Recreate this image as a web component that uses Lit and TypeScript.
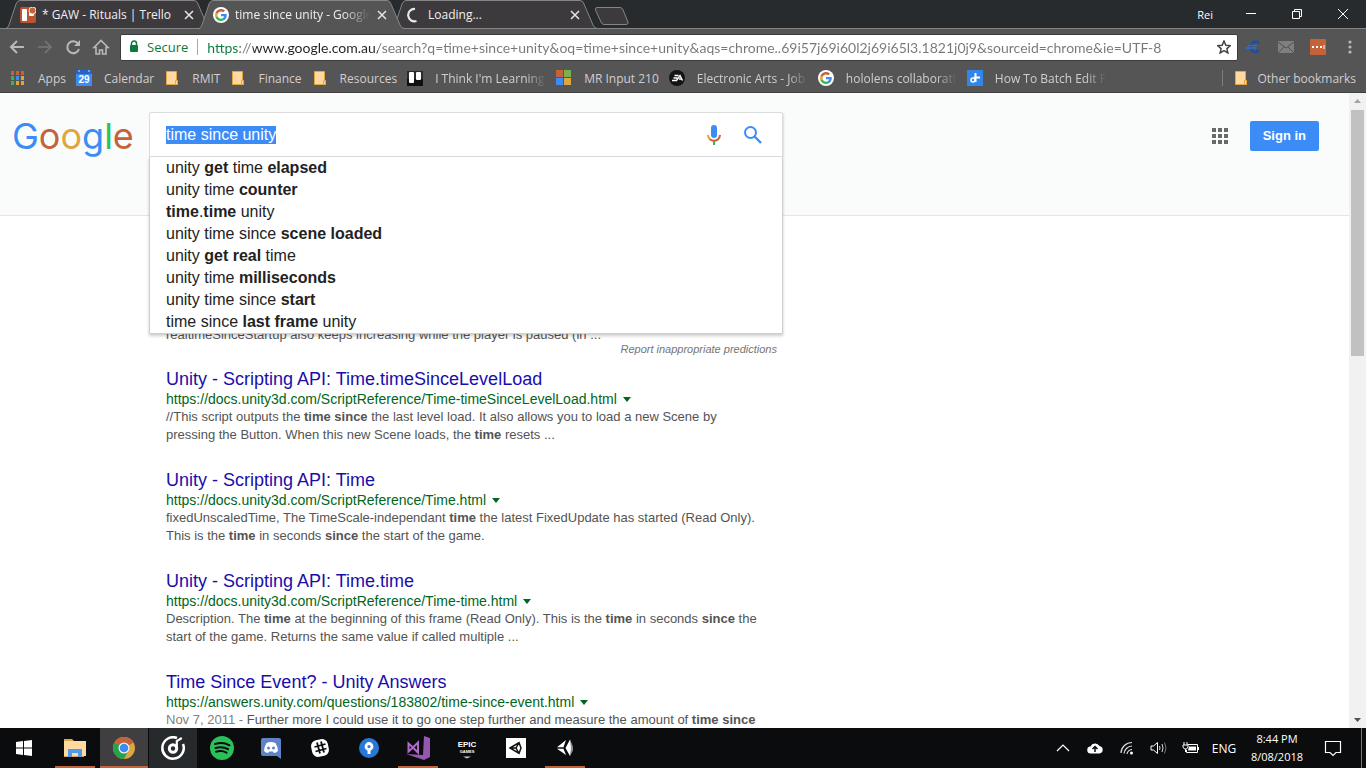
import { LitElement, html, svg, css } from "lit";
import { customElement } from "lit/decorators.js";
import { classMap } from "lit/directives/class-map.js";

const googleG = () => html`<svg width="16" height="16" viewBox="0 0 16 16" aria-hidden="true">
  <circle cx="8" cy="8" r="8" fill="#fff" />
  <g transform="translate(2 2) scale(.25)">
    <path fill="#3b8cf7" d="M47 24.500c0-1.600-.1-3.100-.4-4.500H24v9h12.900c-.6 3-2.200 5.500-4.800 7.200v6h7.700c4.500-4.200 7.200-10.300 7.200-17.700z" />
    <path fill="#2cb956" d="M24 48c6.500 0 11.900-2.100 15.900-5.800l-7.700-6c-2.200 1.400-4.900 2.300-8.200 2.300-6.300 0-11.600-4.200-13.500-9.900H2.600v6.200C6.500 42.600 14.600 48 24 48z" />
    <path fill="#dfa63f" d="M10.500 28.600c-1-2.900-1-6.200 0-9.200v-6.200H2.600a24 24 0 0 0 0 21.600z" />
    <path fill="#c4623a" d="M24 9.500c3.500 0 6.700 1.200 9.200 3.600l6.900-6.900C35.900 2.400 30.500 0 24 0 14.600 0 6.500 5.400 2.600 13.200l7.900 6.200C12.400 13.700 17.700 9.500 24 9.500z" />
  </g>
</svg>`;

const folder = () => html`<svg width="16" height="16" viewBox="0 0 16 16" aria-hidden="true">
  <path d="M2.500 1.500h10v9h1v4h-11z" fill="#ffd9a0" stroke="#e3a445" />
  <path d="M11.500 14.500v-4h2v4z" fill="#ffd9a0" stroke="#e3a445" />
</svg>`;

const appsIcon = () => html`<svg width="16" height="16" viewBox="0 0 16 16" aria-hidden="true">
  ${[["#c4623a", "#c4623a", "#c4623a"], ["#2cb956", "#3b8cf7", "#dfa63f"], ["#2cb956", "#dfa63f", "#dfa63f"]].map(
    (row, y) => row.map((c, x) => svg`<rect x=${1 + x * 5} y=${1 + y * 5} width="3" height="4" fill=${c} />`)
  )}
</svg>`;

const calendarIcon = () => html`<svg width="16" height="16" viewBox="0 0 16 16" aria-hidden="true">
  <rect width="16" height="16" fill="#3b8cf7" /><rect width="16" height="4" fill="#2a63bd" />
  <path d="M3 0v2M13 0v2" stroke="#cfe0fa" />
  <text x="8" y="13" text-anchor="middle" font-family="Liberation Sans, sans-serif" font-weight="700" font-size="10" fill="#fff">29</text>
</svg>`;

const trelloDark = () => html`<svg width="16" height="16" viewBox="0 0 16 16" aria-hidden="true">
  <rect y="8" width="16" height="8" fill="#101010" /><rect y="1" width="16" height="8" fill="#2c2a2c" />
  <rect x="2" y="2" width="5" height="11" rx="1" fill="#fff" /><rect x="9" y="2" width="5" height="8" rx="1" fill="#fff" />
</svg>`;

const trelloRed = () => html`<svg width="16" height="16" viewBox="0 0 16 16" aria-hidden="true">
  <rect width="16" height="16" rx="2" fill="#b9552f" />
  <rect x="2" y="2" width="5" height="12" rx="1" fill="#fff" />
  <rect x="9" y="2" width="5" height="7" rx="1" fill="#fff" />
  <circle cx="12.500" cy="3.500" r="3.500" fill="#c4623a" stroke="#f3e4dd" />
</svg>`;

const microsoftIcon = () => html`<svg width="16" height="16" viewBox="0 0 16 16" aria-hidden="true">
  <rect width="7" height="7" fill="#c4623a" /><rect x="8" width="7" height="7" fill="#7bb050" />
  <rect y="8" width="7" height="7" fill="#3b8cf7" /><rect x="8" y="8" width="7" height="7" fill="#dfa63f" />
</svg>`;

const eaIcon = () => html`<svg width="16" height="16" viewBox="0 0 16 16" aria-hidden="true">
  <circle cx="8" cy="8" r="8" fill="#141414" />
  <path d="M5.500 5.500h4M4.500 8h4M3 10.500h4.500L11 5.500l2.500 5M10 9h3" fill="none" stroke="#fff" stroke-width="1.400" />
</svg>`;

const plusIcon = () => html`<svg width="16" height="16" viewBox="0 0 16 16" aria-hidden="true">
  <rect width="16" height="16" fill="#3285ea" />
  <path d="M8.500 3v9M7 7.500h6" stroke="#fff" stroke-width="2" /><circle cx="6" cy="10" r="2" fill="none" stroke="#fff" stroke-width="1.500" />
</svg>`;

const spinner = () => html`<svg width="16" height="16" viewBox="0 0 16 16" aria-hidden="true">
  <path d="M9 2a6.200 6.200 0 1 0 1.500 12" fill="none" stroke="#e8e8e8" stroke-width="2.200" />
</svg>`;

const bookmarks = [
  { label: "Apps", icon: appsIcon, clip: false },
  { label: "Calendar", icon: calendarIcon, clip: false },
  { label: "RMIT", icon: folder, clip: false },
  { label: "Finance", icon: folder, clip: false },
  { label: "Resources", icon: folder, clip: false },
  { label: "I Think I'm Learning", icon: trelloDark, clip: true },
  { label: "MR Input 210", icon: microsoftIcon, clip: false },
  { label: "Electronic Arts - Job", icon: eaIcon, clip: true },
  { label: "hololens collaboratic", icon: googleG, clip: true },
  { label: "How To Batch Edit Pl", icon: plusIcon, clip: true },
];

@customElement("browser-tabs")
export class BrowserTabs extends LitElement {
  static styles = css`
    :host { display: flex; height: 29px; background: #272b2d; color: #fff; border-bottom: 1px solid #858585; box-sizing: border-box; padding-left: 6px; }
    .tab { position: relative; isolation: isolate; width: 205px; height: 29px; display: flex; align-items: center; gap: 6px; padding: 0 16px 0 14px; box-sizing: border-box; flex: none; }
    .tab + .tab { margin-left: -12px; }
    .active { z-index: 1; }
    .shape { position: absolute; inset: 0; z-index: -1; }
    .title { flex: 1; font-size: 12px; line-height: 16px; white-space: nowrap; overflow: hidden; color: #f0f0f0; }
    .fade { mask-image: linear-gradient(to right, #000 80%, transparent); }
    button { background: none; border: 0; padding: 0; margin: 0; color: inherit; font: inherit; display: flex; align-items: center; justify-content: center; }
    .close { width: 12px; height: 16px; }
    .new { align-self: flex-start; margin: 7px 0 0 -3px; }
    .controls { margin-left: auto; display: flex; height: 28px; align-items: center; font-size: 11px; }
    .user { margin-right: 15px; }
    .win { width: 46px; height: 28px; }
  `;
  tab(title: string, icon: unknown, active: boolean, fade: boolean) {
    return html`<div class=${classMap({ tab: true, active })}>
      <svg class="shape" width="205" height="29" viewBox="0 0 205 29" aria-hidden="true">
        <path d="M0 29Q2 28 3 25L10 4Q11.500 .5 14 .5H188Q191 .5 192 4L201 25Q202 28 205 29z" fill=${active ? "#555555" : "#3d3a3e"} />
        <path d="M0 28.500Q2 28 3 25L10 4Q11.500 .5 14 .5H188Q191 .5 192 4L201 25Q202 28 205 28.500${active ? "" : "z"}" fill="none" stroke="#858585" />
      </svg>
      ${icon}
      <span class=${classMap({ title: true, fade })}>${title}</span>
      <button class="close" aria-label="Close tab"><svg width="10" height="10" viewBox="0 0 10 10"><path d="M1 1l8 8M9 1l-8 8" stroke="#e6e6e6" stroke-width="1.500" /></svg></button>
    </div>`;
  }
  render() {
    return html`
      ${this.tab("* GAW - Rituals | Trello", trelloRed(), false, false)}
      ${this.tab("time since unity - Google Search", googleG(), true, true)}
      ${this.tab("Loading...", spinner(), false, false)}
      <button class="new" aria-label="New tab"><svg width="36" height="18" viewBox="0 0 36 18"><path d="M3 .5H26Q28 .5 29 3L34 15Q34.500 17.500 32 17.500H10Q8 17.500 7 15L1.500 3Q1 .5 3 .5z" fill="#3d3a3e" stroke="#858585" /></svg></button>
      <div class="controls">
        <span class="user">Rei</span>
        <button class="win" aria-label="Minimise"><svg width="10" height="10" viewBox="0 0 10 10"><path d="M0 4.500h10" stroke="#fff" /></svg></button>
        <button class="win" aria-label="Restore"><svg width="10" height="10" viewBox="0 0 10 10"><path d="M.5 2.500h7v7h-7zM2.500 2.500v-2h7v7h-2" fill="none" stroke="#fff" /></svg></button>
        <button class="win" aria-label="Close window"><svg width="10" height="10" viewBox="0 0 10 10"><path d="M0 0l10 10M10 0L0 10" stroke="#fff" /></svg></button>
      </div>`;
  }
}

@customElement("browser-toolbar")
export class BrowserToolbar extends LitElement {
  static styles = css`
    :host { display: block; background: #555; color: #ddd; border-bottom: 1px solid #404040; }
    button { background: none; border: 0; padding: 0; color: inherit; display: flex; align-items: center; justify-content: center; flex: none; }
    .row { display: flex; align-items: center; height: 36px; padding: 0 0 0 8px; }
    .nav { width: 28px; height: 28px; margin-left: -5px; margin-right: 5px; }
    .omni { flex: 1; min-width: 0; display: flex; align-items: center; height: 27px; background: #fff; border-radius: 2px; border: 1px solid #3c3c3c; box-sizing: border-box; padding: 0 6px 0 8px; }
    .secure { color: #0b7a3c; font-size: 13px; margin: 0 9px 0 8px; }
    .rule { width: 1px; height: 16px; background: #aaa; margin-right: 9px; }
    input { flex: 1; min-width: 0; border: 0; outline: 0; padding: 0; height: 22px; font: 14px Lato, "Open Sans", sans-serif; color: transparent; -webkit-background-clip: text; background-clip: text; background-image: linear-gradient(to right, #0b7a3c 0 33px, #777 33px 46px, #222 46px 171px, #777 171px); }
    .ext { width: 32px; height: 24px; }
    .marks { display: flex; align-items: center; height: 26px; padding: 0 10px 1px; gap: 10px; font-size: 12px; }
    a { color: #d2cdd2; text-decoration: none; display: flex; align-items: center; gap: 12px; white-space: nowrap; }
    a svg { flex: none; }
    .clip { width: 111px; overflow: hidden; mask-image: linear-gradient(to right, #000 82%, transparent); }
    .sep { width: 1px; height: 16px; background: #7d7d7d; margin-left: auto; }
    .other { gap: 8px; }
  `;
  render() {
    return html`
      <div class="row">
        <button class="nav" aria-label="Back"><svg width="18" height="18" viewBox="0 0 18 18"><path d="M16 9H3M9 3L3 9l6 6" fill="none" stroke="#bbb8bb" stroke-width="2" /></svg></button>
        <button class="nav" aria-label="Forward" disabled><svg width="18" height="18" viewBox="0 0 18 18"><path d="M2 9h13M9 3l6 6-6 6" fill="none" stroke="#777" stroke-width="1.500" /></svg></button>
        <button class="nav" aria-label="Reload"><svg width="18" height="18" viewBox="0 0 18 18"><path d="M14 5.500A6 6 0 1 0 15 11" fill="none" stroke="#bbb8bb" stroke-width="2" /><path d="M16 2v6h-6z" fill="#bbb8bb" /></svg></button>
        <button class="nav" aria-label="Home"><svg width="18" height="18" viewBox="0 0 18 18"><path d="M2 9.500L9 2.500l7 7H14V16h-3.500v-4h-3v4H4V9.500z" fill="none" stroke="#bbb8bb" stroke-width="1.600" /></svg></button>
        <div class="omni">
          <svg width="10" height="14" viewBox="0 0 10 14" aria-hidden="true"><path d="M2.500 6V3.500a2.500 2.500 0 0 1 5 0V6" fill="none" stroke="#0b7a3c" stroke-width="1.500" /><rect x="1" y="5" width="8" height="7" rx="1" fill="#0b7a3c" /></svg>
          <span class="secure">Secure</span><span class="rule"></span>
          <input type="text" aria-label="Address" .value=${"https://www.google.com.au/search?q=time+since+unity&oq=time+since+unity&aqs=chrome..69i57j69i60l2j69i65l3.1821j0j9&sourceid=chrome&ie=UTF-8"} />
          <button aria-label="Bookmark this page"><svg width="14" height="14" viewBox="0 0 14 14"><path d="M7 1l1.800 4.200 4.500.4-3.400 3 1 4.400L7 10.700 3.100 13l1-4.400-3.400-3 4.500-.4z" fill="none" stroke="#444" stroke-width="1.500" /></svg></button>
        </div>
        <button class="ext" aria-label="Currency converter"><svg width="16" height="14" viewBox="0 0 16 14"><path d="M13 3Q10 .5 7 2.500 4.500 4.500 5 8q1 4 4.500 4 2 0 3.500-1.500" fill="none" stroke="#1f4ea0" stroke-width="2.500" /><path d="M2 5.500h9M0 8h10" fill="none" stroke="#2f6fd0" stroke-width="1.500" /></svg></button>
        <button class="ext" aria-label="Mail"><svg width="16" height="14" viewBox="0 0 16 14"><rect y="1" width="16" height="12" fill="#7f7f7f" /><path d="M0 2l8 6 8-6M0 13l6-6M16 13l-6-6" fill="none" stroke="#505050" /></svg></button>
        <button class="ext" aria-label="Extension"><svg width="16" height="16" viewBox="0 0 16 16"><rect width="16" height="16" rx="1" fill="#c4623a" /><path d="M2 7h2v2H2zM6 7h2v2H6zM10 7h2v2h-2zM13.500 6h1v4h-1z" fill="#fff" /></svg></button>
        <button class="ext" aria-label="Menu"><svg width="4" height="14" viewBox="0 0 4 14"><g fill="#bbb8bb"><circle cx="2" cy="2" r="1.600" /><circle cx="2" cy="7" r="1.600" /><circle cx="2" cy="12" r="1.600" /></g></svg></button>
      </div>
      <nav class="marks">
        ${bookmarks.map((b) => html`<a href="#">${b.icon()}<span class=${classMap({ clip: b.clip })}>${b.label}</span></a>`)}
        <span class="sep"></span>
        <a class="other" href="#">${folder()}<span>Other bookmarks</span></a>
      </nav>`;
  }
}

const suggestions = [
  html`unity <b>get</b> time <b>elapsed</b>`,
  html`unity time <b>counter</b>`,
  html`<b>time</b>.<b>time</b> unity`,
  html`unity time since <b>scene loaded</b>`,
  html`unity <b>get real</b> time`,
  html`unity time <b>milliseconds</b>`,
  html`unity time since <b>start</b>`,
  html`time since <b>last frame</b> unity`,
];

const results = [
  {
    title: "Unity - Scripting API: Time.timeSinceLevelLoad",
    url: "https://docs.unity3d.com/ScriptReference/Time-timeSinceLevelLoad.html",
    text: html`//This script outputs the <b>time since</b> the last level load. It also allows you to load a new Scene by pressing the Button. When this new Scene loads, the <b>time</b> resets ...`,
  },
  {
    title: "Unity - Scripting API: Time",
    url: "https://docs.unity3d.com/ScriptReference/Time.html",
    text: html`fixedUnscaledTime, The TimeScale-independant <b>time</b> the latest FixedUpdate has started (Read Only). This is the <b>time</b> in seconds <b>since</b> the start of the game.`,
  },
  {
    title: "Unity - Scripting API: Time.time",
    url: "https://docs.unity3d.com/ScriptReference/Time-time.html",
    text: html`Description. The <b>time</b> at the beginning of this frame (Read Only). This is the <b>time</b> in seconds <b>since</b> the start of the game. Returns the same value if called multiple ...`,
  },
  {
    title: "Time Since Event? - Unity Answers",
    url: "https://answers.unity.com/questions/183802/time-since-event.html",
    text: html`<span class="date">Nov 7, 2011 - </span>Further more I could use it to go one step further and measure the amount of <b>time since</b>`,
  },
];

@customElement("search-page")
export class SearchPage extends LitElement {
  static styles = css`
    :host { display: flex; flex: 1; min-height: 0; background: #fff; font-family: "Liberation Sans", Arial, sans-serif; }
    .view { flex: 1; min-width: 0; overflow: hidden; }
    header { display: flex; align-items: flex-start; height: 123px; box-sizing: border-box; background: #fafcfb; border-bottom: 1px solid #e4e6e5; padding: 19px 30px 0 12px; }
    .logo { width: 137px; flex: none; font: 400 36px/48px Inter, sans-serif; text-decoration: none; }
    .b { color: #3b8cf7; } .r { color: #c4623a; } .y { color: #dfa63f; } .g { color: #2cc05a; }
    form { position: relative; width: 634px; flex: none; z-index: 1; }
    .box { display: flex; align-items: center; height: 45px; background: #fff; border: 1px solid #dadcdb; border-radius: 2px 2px 0 0; box-sizing: border-box; padding: 0 19px 0 16px; gap: 18px; box-shadow: 1px 1px 2px rgba(0, 0, 0, 0.12); }
    input { flex: 1; min-width: 0; border: 0; outline: 0; padding: 0; font: 16px "Liberation Sans", Arial, sans-serif; color: #222; background: none; }
    input::selection { background: #3b8cf7; color: #fff; }
    button { border: 0; background: none; padding: 0; display: flex; }
    .drop { position: absolute; top: 45px; left: 0; right: 0; }
    ul { list-style: none; margin: 0; padding: 0 16px; background: #fff; border: 1px solid #cfcfcf; border-top: 0; box-shadow: 0 2px 3px rgba(0, 0, 0, 0.2); color: #222; font-size: 16px; line-height: 22px; }
    .report { display: block; float: right; margin: 8px 6px 0 0; font: italic 11px/14px "Liberation Sans", Arial, sans-serif; color: #757575; text-decoration: none; }
    .right { margin-left: auto; display: flex; align-items: center; gap: 22px; padding-top: 9px; }
    .signin { font: bold 13px/30px "Liberation Sans", Arial, sans-serif; color: #fff; background: #3b8cf7; border-radius: 2px; padding: 0 13px; text-decoration: none; }
    main { padding: 110px 0 0 166px; width: 600px; font-size: 13px; line-height: 18px; color: #545454; }
    p { margin: 0; }
    article { margin-top: 26px; }
    .first { margin-bottom: -1px; }
    h3 { margin: 0; font-weight: 400; font-size: 18px; line-height: 21px; }
    h3 a { color: #1a0dab; text-decoration: none; }
    cite { display: flex; align-items: center; gap: 6px; font-style: normal; font-size: 14px; line-height: 18px; color: #006621; white-space: nowrap; }
    .date { color: #808080; }
    .scroll { width: 17px; flex: none; background: #f1f1f1; display: flex; flex-direction: column; align-items: center; }
    .scroll svg { flex: none; }
    .track { flex: 1; align-self: stretch; padding: 0 2px; }
    .thumb { height: 41%; background: #c1c1c1; }
  `;
  firstUpdated() {
    const box = this.renderRoot.querySelector("input") as HTMLInputElement;
    box.focus();
    box.select();
  }
  render() {
    return html`
      <div class="view">
        <header>
          <a class="logo" href="#" aria-label="Google"><span class="b">G</span><span class="r">o</span><span class="y">o</span><span class="b">g</span><span class="g">l</span><span class="r">e</span></a>
          <form>
            <div class="box">
              <input type="text" aria-label="Search" .value=${"time since unity"} spellcheck="false" />
              <button type="button" aria-label="Search by voice"><svg width="22" height="22" viewBox="0 0 22 22"><rect x="8" y="1" width="6" height="13" rx="3" fill="#3b8cf7" /><path d="M5 11a6 6 0 0 0 3 5" fill="none" stroke="#dfa63f" stroke-width="2" /><path d="M7 15.500Q11 18 15 15.300A6 6 0 0 0 17 11" fill="none" stroke="#c4623a" stroke-width="2" /><path d="M11 17v4" stroke="#2cb956" stroke-width="2" /></svg></button>
              <button type="button" aria-label="Search"><svg width="20" height="20" viewBox="0 0 20 20"><circle cx="7.500" cy="7.500" r="5.500" fill="none" stroke="#3b8cf7" stroke-width="2" /><path d="M11.500 11.500L18 18" stroke="#3b8cf7" stroke-width="2.400" /></svg></button>
            </div>
            <div class="drop">
              <ul>${suggestions.map((s) => html`<li>${s}</li>`)}</ul>
              <a class="report" href="#">Report inappropriate predictions</a>
            </div>
          </form>
          <div class="right">
            <button aria-label="Google apps"><svg width="16" height="16" viewBox="0 0 16 16">${[0, 6, 12].map((y) => [0, 6, 12].map((x) => svg`<rect x=${x} y=${y} width="4" height="4" fill="#696969" />`))}</svg></button>
            <a class="signin" href="#">Sign in</a>
          </div>
        </header>
        <main>
          <p class="first">realtimeSinceStartup also keeps increasing while the player is paused (in ...</p>
          ${results.map(
            (r) => html`<article>
              <h3><a href="#">${r.title}</a></h3>
              <cite>${r.url}<svg width="8" height="5" viewBox="0 0 8 5" aria-hidden="true"><path d="M0 0h8L4 5z" fill="#006621" /></svg></cite>
              <p>${r.text}</p>
            </article>`
          )}
        </main>
      </div>
      <div class="scroll">
        <svg width="17" height="17" viewBox="0 0 17 17"><path d="M5 10h7L8.500 6z" fill="#a3a3a3" /></svg>
        <div class="track"><div class="thumb"></div></div>
        <svg width="17" height="17" viewBox="0 0 17 17"><path d="M5 7h7l-3.500 4z" fill="#505050" /></svg>
      </div>`;
  }
}

const apps = [
  { name: "File Explorer", state: "open", art: svg`<path d="M1 3h8l2 2h10v16H1z" fill="#e3a445" /><path d="M1 5h22v15H1z" fill="#ffd9a0" /><path d="M5 21v-8h14v8h-4v-4H9v4z" fill="#4e9bec" />` },
  { name: "Chrome", state: "active", art: svg`<circle cx="12" cy="12" r="11" fill="#dfa63f" /><path d="M12 12L2.500 6.500A11 11 0 0 1 21.500 6.500z" fill="#c4623a" /><path d="M12 12L2.500 6.500A11 11 0 0 0 12 23l4.500-8.500z" fill="#25a24c" /><path d="M12 6.500h9.500L12 12z" fill="#c4623a" /><circle cx="12" cy="12" r="5.500" fill="#f2f2f2" /><circle cx="12" cy="12" r="4.300" fill="#3b8cf7" />` },
  { name: "Groove", state: "hover", art: svg`<path d="M16 2A10.700 10.700 0 1 0 22 8" fill="none" stroke="#fff" stroke-width="2.500" /><circle cx="12" cy="12.500" r="3.700" fill="none" stroke="#fff" stroke-width="3" /><path d="M15.800 11V5l5-3" fill="none" stroke="#fff" stroke-width="2.200" />` },
  { name: "Spotify", state: "", art: svg`<circle cx="12" cy="12" r="12" fill="#2cc05a" /><path d="M5 8q8-2.500 14.500 1.300M5.500 12q7-2 12.500 1.200M6 15.700q6-1.600 10.500 1" fill="none" stroke="#0b0c0e" stroke-width="2" stroke-linecap="round" />` },
  { name: "Discord", state: "", art: svg`<path d="M4 2h16q2 0 2 2v19l-4-3H4q-2 0-2-2V4q0-2 2-2z" fill="#5f83c9" /><path d="M7.500 7Q12 5 16.500 7 19 11 19 15q-2 2-4 2l-1-1.500h-4L9 17q-2 0-4-2 0-4 2.500-8z" fill="#fff" /><circle cx="9.500" cy="12" r="1.500" fill="#5f83c9" /><circle cx="14.500" cy="12" r="1.500" fill="#5f83c9" />` },
  { name: "Slack", state: "", art: svg`<rect x="3.500" y="3.500" width="17" height="17" rx="6" fill="#fff" transform="rotate(-12 12 12)" /><path d="M9 6.500l3 11M13 5.500l3 11M6.500 11l11-3M7.500 15.500l11-3" stroke="#0b0c0e" stroke-width="1.800" />` },
  { name: "Sourcetree", state: "", art: svg`<circle cx="12" cy="12" r="10" fill="#2878d8" /><circle cx="12" cy="10.500" r="3" fill="none" stroke="#fff" stroke-width="2.800" /><path d="M12 13v5" stroke="#fff" stroke-width="3" />` },
  { name: "Visual Studio", state: "open", art: svg`<path d="M18 0l6 2v19l-6 3L0 18l17 1z" fill="#9558b0" /><path d="M2.500 7.500l4.500 4 5-5v10l-5-5-4.500 4z" fill="none" stroke="#b06bc9" stroke-width="2" />` },
  { name: "Epic Games", state: "", art: svg`<text x="12" y="11" text-anchor="middle" font-family="Liberation Sans, sans-serif" font-weight="700" font-size="8" fill="#fff">EPIC</text><text x="12" y="17" text-anchor="middle" font-family="Liberation Sans, sans-serif" font-weight="700" font-size="4" fill="#fff">GAMES</text><path d="M8 20.500h8l-4 2z" fill="#ccc" />` },
  { name: "Unity Hub", state: "", art: svg`<rect x="2" y="2" width="20" height="20" fill="#fff" /><path d="M6 12l9-5.500 2 5.500-2 5.500zM6 12h6M15 6.500L12 12l3 5.500" fill="none" stroke="#111" stroke-width="1.500" />` },
  { name: "Unity", state: "open", art: svg`<path d="M4 11.200l9-7.200-2.500 7.200zM4 12.800h6.500L13 19zM12.500 12L17 3.500 19.500 12 17 20z" fill="#fff" /><path d="M17 3.500l3 7v4l-3 5.500 1-8z" fill="#8b8b8b" />` },
];

@customElement("task-bar")
export class TaskBar extends LitElement {
  static styles = css`
    :host { display: flex; height: 40px; flex: none; background: #0b0c0e; color: #fff; }
    button { border: 0; background: none; padding: 0; display: flex; align-items: center; justify-content: center; height: 40px; color: inherit; font: inherit; flex: none; }
    .start { width: 48px; margin-right: 3px; }
    .apps { display: flex; gap: 1px; }
    .app { width: 48px; box-sizing: border-box; position: relative; }
    .active { background: #403e41; }
    .hover { background: #262a2d; }
    .bar { position: absolute; bottom: 0; left: 4px; right: 4px; height: 2px; background: #c4623a; }
    .active .bar { left: 0; right: 0; }
    .tray { margin-left: auto; display: flex; align-items: center; font-size: 12px; }
    .item { width: 32px; }
    .lang { width: 34px; }
    .clock { width: 72px; flex-direction: column; line-height: 18px; font-size: 11px; }
    .note { width: 40px; }
    .peek { width: 5px; border-left: 1px solid #777; margin-left: 8px; }
  `;
  render() {
    return html`
      <button class="start" aria-label="Start"><svg width="16" height="16" viewBox="0 0 16 16"><path d="M0 2l7-1v6.500H0zM8 1l8-1v7.500H8zM0 8.500h7V15l-7-1zM8 8.500h8V16l-8-1z" fill="#fff" /></svg></button>
      <div class="apps">
        ${apps.map(
          (a) => html`<button class=${classMap({ app: true, active: a.state === "active", hover: a.state === "hover" })} aria-label=${a.name}>
            <svg width="24" height="24" viewBox="0 0 24 24">${a.art}</svg>
            ${a.state === "open" || a.state === "active" ? html`<span class="bar"></span>` : ""}
          </button>`
        )}
      </div>
      <div class="tray">
        <button class="item" aria-label="Show hidden icons"><svg width="14" height="8" viewBox="0 0 14 8"><path d="M1 7l6-6 6 6" fill="none" stroke="#fff" stroke-width="1.200" /></svg></button>
        <button class="item" aria-label="Cloud sync"><svg width="16" height="12" viewBox="0 0 16 12"><path d="M4 11.500a3.500 3.500 0 0 1-.5-7A5 5 0 0 1 12.500 4a3.800 3.800 0 0 1 0 7.500z" fill="#fff" /><path d="M8 10V5M5.500 7L8 4.500 10.500 7" fill="none" stroke="#0b0c0e" stroke-width="1.500" /></svg></button>
        <button class="item" aria-label="Network"><svg width="14" height="14" viewBox="0 0 14 14"><path d="M1 12A11 11 0 0 1 12 1.500M4 12.500a8.500 8.500 0 0 1 8-7.500M7 13a5.500 5.500 0 0 1 5-4.500" fill="none" stroke="#ddd" stroke-width="1.200" /><circle cx="11.500" cy="12" r="1.500" fill="#fff" /></svg></button>
        <button class="item" aria-label="Volume"><svg width="18" height="14" viewBox="0 0 18 14"><path d="M1 5h2.500l4-3.500v11l-4-3.500H1z" fill="none" stroke="#fff" /><path d="M9.500 5q1 2 0 4M12 3q2 4 0 8" fill="none" stroke="#ddd" /><path d="M14.500 1.500q3 5.500 0 11" fill="none" stroke="#777" /></svg></button>
        <button class="item" aria-label="Battery"><svg width="18" height="12" viewBox="0 0 18 12"><path d="M6 2.500h9.500v8H4.500V8M16.500 5v3" fill="none" stroke="#fff" /><path d="M7 4.500h7v4H6z" fill="#fff" /><path d="M1 3h5v2L4.500 7h-2L1 5zM2 0v3M5 0v3M3.500 7v3" fill="none" stroke="#fff" /></svg></button>
        <button class="lang">ENG</button>
        <button class="clock"><span>8:44 PM</span><span>8/08/2018</span></button>
        <button class="note" aria-label="Notifications"><svg width="18" height="18" viewBox="0 0 18 18"><path d="M1.500 2.500h15v11h-4.500L9 16.500 6 13.500H1.500z" fill="none" stroke="#fff" stroke-width="1.200" /></svg></button>
        <button class="peek" aria-label="Show desktop"></button>
      </div>`;
  }
}

@customElement("app-root")
export class AppRoot extends LitElement {
  static styles = css`
    :host { display: flex; flex-direction: column; height: 100vh; overflow: hidden; font-family: "Open Sans", "Noto Sans", sans-serif; }
  `;
  render() {
    return html`<browser-tabs></browser-tabs><browser-toolbar></browser-toolbar><search-page></search-page><task-bar></task-bar>`;
  }
}
